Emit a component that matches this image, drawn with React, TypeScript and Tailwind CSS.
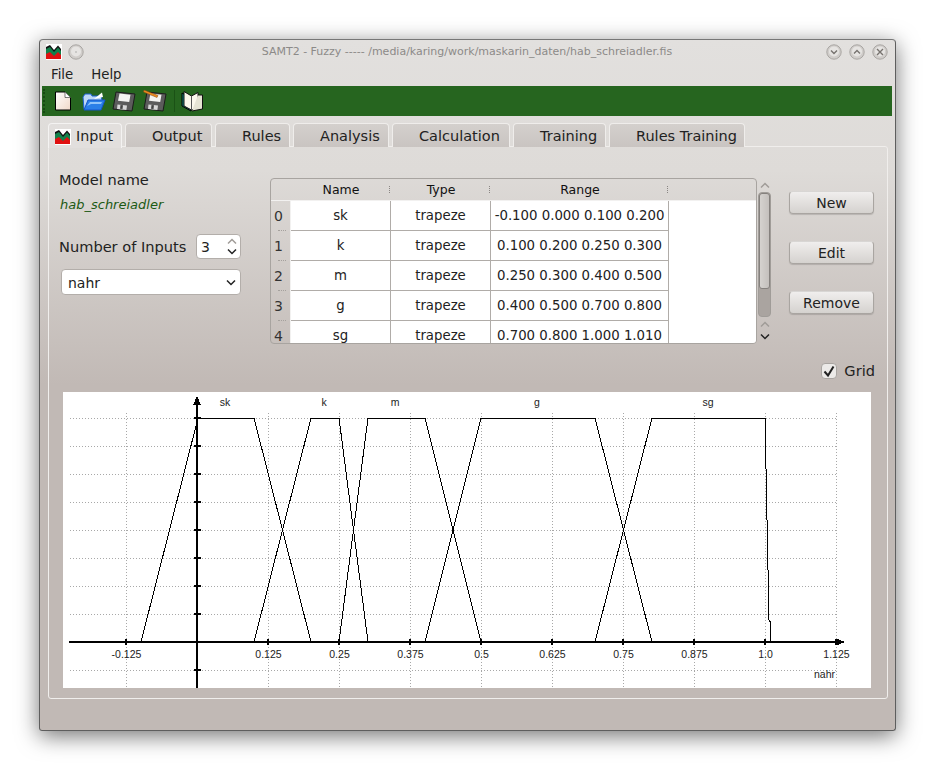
import React from 'react';

const rows = [
    ['sk', '-0.100 0.000 0.100 0.200'],
    ['k', '0.100 0.200 0.250 0.300'],
    ['m', '0.250 0.300 0.400 0.500'],
    ['g', '0.400 0.500 0.700 0.800'],
    ['sg', '0.700 0.800 1.000 1.010'],
];

const tabs = [
    { label: 'Output', w: 'w-[87px]' },
    { label: 'Rules', w: 'w-[75px]' },
    { label: 'Analysis', w: 'w-[96px]' },
    { label: 'Calculation', w: 'w-[118px]' },
    { label: 'Training', w: 'w-[93px]' },
    { label: 'Rules Training', w: 'w-[136px]' },
];

const AppIcon = () => (
    <svg width="16" height="16" viewBox="0 0 16 16" className="shrink-0">
        <rect width="16" height="16" fill="#fff" />
        <path d="M0 15V3L4 1L8 6L12 1.5L15 5V15Z" fill="#111" />
        <path d="M0 15V5L4 3L8 8L12 3.5L15 7V15Z" fill="#12804a" />
        <path d="M0 15V10L4 8L8 12L12 8L15 11V15Z" fill="#e01010" />
    </svg>
);

const Floppy = ({ pencil }: { pencil?: boolean }) => (
    <svg width="24" height="24" viewBox="0 0 24 24" className="shrink-0">
        <path d="M4 3L23 5L20 22L1 20Z" fill="#5c5c5c" stroke="#1c1c1c" strokeWidth="1" />
        <path d="M7.5 4.5L18.5 5.7L17.2 13L6 11.8Z" fill="#f4f4f2" />
        <path d="M5.5 15.5L15 16.5L14.4 21L5 20Z" fill="#d8d8d8" />
        <path d="M8.5 16L11 16.3L10.5 20L8 19.7Z" fill="#444" />
        {pencil && <path d="M1 1L15 6.5L14 8.5L0.5 3Z" fill="#ee8a20" stroke="#7a4a10" strokeWidth="0.5" />}
    </svg>
);

const WinButton = ({ d }: { d?: string }) => (
    <svg width="16" height="16" viewBox="0 0 16 16" className="shrink-0">
        <circle cx="8" cy="8" r="7.2" fill="#d0cdca" stroke="#a9a6a3" />
        <circle cx="8" cy="7.4" r="5" fill="#e6e4e2" />
        {d ? <path d={d} fill="none" stroke="#77736f" strokeWidth="1.4" /> : <circle cx="8" cy="8" r="0.7" fill="#999" />}
    </svg>
);

const Chevron = ({ up, light }: { up?: boolean; light?: boolean }) => (
    <svg width="10" height="7" viewBox="0 0 10 7" className="shrink-0">
        <path d={up ? 'M1 5.5L5 1.5L9 5.5' : 'M1 1.5L5 5.5L9 1.5'} fill="none" stroke={light ? '#a09c98' : '#222'} strokeWidth="1.5" />
    </svg>
);

const xs = [
    [126.5, '-0.125'],
    [268.5, '0.125'],
    [339.5, '0.25'],
    [410.5, '0.375'],
    [481.5, '0.5'],
    [552.5, '0.625'],
    [623.5, '0.75'],
    [694.5, '0.875'],
    [765.5, '1.0'],
    [836.5, '1.125'],
] as const;

const ys = [418, 446, 474, 502, 530, 558, 586, 614, 670];

const shapes = [
    '141,642 198,418 254,418 311,642',
    '254,642 311,418 339,418 368,642',
    '339,642 368,418 425,418 481,642',
    '425,642 481,418 595,418 652,642',
    '595,642 652,418 765,418 769,620 770.5,622 770.5,642',
];

const names = [
    ['sk', 225],
    ['k', 324],
    ['m', 395],
    ['g', 537],
    ['sg', 708],
] as const;

const Chart = () => (
    <svg width="808" height="296" viewBox="63 392 808 296" className="block bg-white" fontFamily="'Liberation Sans', sans-serif" fontSize="10.5" fill="#222">
        <g stroke="#a8a8a8" strokeDasharray="1 2" shapeRendering="crispEdges">
            {ys.map((y) => (
                <line key={y} x1="70" x2="837" y1={y + 0.5} y2={y + 0.5} />
            ))}
            <line x1="70" x2="197" y1="418.5" y2="418.5" />
            {xs.map(([x]) => (
                <line key={x} x1={x} x2={x} y1="413" y2="688" />
            ))}
        </g>
        <g fill="none" stroke="#000" strokeWidth="1" shapeRendering="crispEdges">
            {shapes.map((p) => (
                <polyline key={p} points={p} />
            ))}
        </g>
        <g fill="#000" shapeRendering="crispEdges">
            <rect x="69" y="641" width="770" height="2" />
            <rect x="196" y="402" width="2" height="286" />
            <path d="M197 396L201 405H193Z" />
            <path d="M845 642L838 639.5V644.5Z" />
            <rect x="835" y="639" width="4" height="6" />
            {xs.slice(0, 9).map(([x]) => (
                <rect key={x} x={x - 1.5} y="639" width="2" height="6" />
            ))}
            {[418, ...ys].map((y) => (
                <rect key={y} x="194" y={y - 1} width="7" height="2" />
            ))}
        </g>
        {xs.map(([x, label]) => (
            <text key={label} x={x} y="658" textAnchor="middle">
                {label}
            </text>
        ))}
        {names.map(([label, x]) => (
            <text key={label} x={x} y="406" textAnchor="middle">
                {label}
            </text>
        ))}
        <text x="814" y="678">nahr</text>
    </svg>
);

const SideButton = ({ label }: { label: string }) => (
    <button className="w-[85px] h-[23px] rounded-[4px] border border-[#a9a5a1] border-t-[#d8d6d4] bg-gradient-to-b from-[#f0eeed] to-[#d5d2cf] text-[14px] leading-[20px] text-[#222] shadow-[0_1px_1px_rgba(0,0,0,0.15)]">
        {label}
    </button>
);

export default function App() {
    return (
        <div className="w-[934px] h-[770px] bg-white pt-[39px] pl-[39px] overflow-hidden font-['DejaVu_Sans',sans-serif] text-[#222]">
            <div className="w-[857px] h-[692px] flex flex-col border border-[#5e5e5e] border-t-[#777] rounded-t-[4px] rounded-b-[3px] shadow-[0_5px_22px_rgba(0,0,0,0.55)] bg-[linear-gradient(#e2e0de_0,#dedbd8_130px,#c1b9b5_345px)]">
                {/* title bar */}
                <div className="h-[24px] relative flex items-center pl-[6px] shrink-0">
                    <AppIcon />
                    <div className="ml-[6px]">
                        <WinButton />
                    </div>
                    <div className="flex-1 pl-[24px] text-center text-[11px] text-[#8c8a88] whitespace-nowrap">
                        SAMT2 - Fuzzy ----- /media/karing/work/maskarin_daten/hab_schreiadler.fis
                    </div>
                    <div className="flex gap-[7px] pr-[7px]">
                        <WinButton d="M5 6.5L8 9.5L11 6.5" />
                        <WinButton d="M5 9.5L8 6.5L11 9.5" />
                        <WinButton d="M5 5L11 11M11 5L5 11" />
                    </div>
                </div>

                {/* menu */}
                <div className="h-[21px] mb-[1px] flex items-center gap-[18px] pl-[11px] text-[13.3px] shrink-0">
                    <span>File</span>
                    <span>Help</span>
                </div>

                {/* toolbar */}
                <div className="h-[30px] w-[850px] ml-[2px] bg-[#26651f] flex items-center shrink-0 relative">
                    <div className="w-[3px] h-[24px] ml-[1px] border-l-2 border-dotted border-[#174a12]" />
                    <svg width="18" height="20" viewBox="0 0 18 20" className="ml-[8px] shrink-0">
                        <defs>
                            <linearGradient id="pg" x1="0" y1="0" x2="1" y2="1">
                                <stop offset="0" stopColor="#fff" />
                                <stop offset="1" stopColor="#f0d8c8" />
                            </linearGradient>
                        </defs>
                        <path d="M1.5 1H11L16.5 6.5V19H1.5Z" fill="url(#pg)" stroke="#000" />
                        <path d="M11 1V6.5H16.5" fill="#fff" stroke="#444" strokeWidth="0.7" />
                    </svg>
                    <svg width="24" height="20" viewBox="0 0 24 20" className="ml-[10px] shrink-0">
                        <path d="M2 18L1 6L3 3H9L10 5H19L20 9" fill="#bcd7f6" stroke="#1a5fd0" />
                        <path d="M12 8L20 1.5L21 6Z" fill="#fff" />
                        <path d="M2 19L6 9H23L19 19Z" fill="#2a7fe8" stroke="#1455c8" />
                        <path d="M5 15L8 11H20L19 13H9Z" fill="#8fc4fa" />
                    </svg>
                    <div className="ml-[6px]">
                        <Floppy />
                    </div>
                    <div className="ml-[7px]">
                        <Floppy pencil />
                    </div>
                    <div className="w-px h-[22px] ml-[7px] bg-[#1b5216]" />
                    <svg width="24" height="22" viewBox="0 0 24 22" className="ml-[5px] shrink-0">
                        <path d="M2 3L11 8V21L2 16Z" fill="#14807a" stroke="#000" />
                        <path d="M4 1.5L11.5 6L18 2.5V17L11.5 20L4 16Z" fill="#fbf8ec" stroke="#111" />
                        <path d="M18 5H22.5V19L12 21" fill="#e6e4d4" stroke="#111" />
                        <path d="M11.5 6V20" stroke="#555" />
                    </svg>
                </div>

                {/* tabs */}
                <div className="h-[25px] mt-[6px] pl-[8px] flex items-end shrink-0 relative z-10 -mb-px">
                    <div className="w-[74px] h-[25px] -mb-px flex items-center gap-[5px] pl-[6px] pt-[2px] border border-b-0 border-[#f4f3f2] rounded-t-[4px] bg-[#e2dfdd] text-[14.3px]">
                        <AppIcon />
                        <span>Input</span>
                    </div>
                    <div className="flex gap-[3px] ml-[3px] h-[24px]">
                        {tabs.map((t) => (
                            <div
                                key={t.label}
                                className={`${t.w} pl-[26px] pt-[2px] flex items-center border border-b-0 border-[#efedeb] rounded-t-[4px] bg-gradient-to-b from-[#d4d0cd] to-[#c9c4c1] text-[14.5px] whitespace-nowrap`}
                            >
                                {t.label}
                            </div>
                        ))}
                    </div>
                </div>

                {/* panel */}
                <div className="w-[840px] h-[553px] ml-[8px] border border-[#f0eeec] rounded-[3px] pt-[31px] shrink-0 relative">
                    <div className="flex h-[166px]">
                        <div className="w-[221px] pl-[10px] shrink-0">
                            <div className="text-[14.6px] leading-[17px] mt-[-7px]">Model name</div>
                            <div className="text-[13px] leading-[17px] mt-[8px] pl-px italic text-[#1c5a14]">hab_schreiadler</div>
                            <div className="flex items-center mt-[21px] h-[25px]">
                                <span className="text-[14.6px] w-[137px] pt-[1px]">Number of Inputs</span>
                                <div className="w-[45px] h-[25px] flex items-center justify-between pl-[4px] pr-[3px] bg-white border border-[#b3aeaa] rounded-[4px] text-[14px]">
                                    <span className="pt-[1px]">3</span>
                                    <div className="flex flex-col gap-[3px]">
                                        <Chevron up light />
                                        <Chevron />
                                    </div>
                                </div>
                            </div>
                            <div className="ml-[2px] mt-[10px] w-[180px] h-[26px] flex items-center justify-between pl-[6px] pr-[4px] bg-white border border-[#b3aeaa] rounded-[4px] text-[14px]">
                                <span className="pt-[2px]">nahr</span>
                                <Chevron />
                            </div>
                        </div>

                        {/* table */}
                        <div className="w-[487px] h-[166px] shrink-0 overflow-hidden border border-[#a8a4a0] rounded-[4px]">
                            <div className="h-[22px] flex text-[12.5px] pt-[2px] border-b border-[#f2f1f0] text-[#111]">
                                <div className="w-[20px]" />
                                {[
                                    ['Name', 'w-[100px]'],
                                    ['Type', 'w-[100px]'],
                                    ['Range', 'w-[178px]'],
                                ].map(([h, w]) => (
                                    <div key={h} className={`${w} relative flex items-center justify-center`}>
                                        {h}
                                        <div className="absolute right-[1px] top-[5px] h-[7px] border-r border-dotted border-[#8a8683]" />
                                    </div>
                                ))}
                            </div>
                            <div className="flex flex-col">
                                {rows.map(([name, range], i) => (
                                    <div key={name} className="flex h-[30px] shrink-0">
                                        <div className="w-[19px] pl-[3px] relative flex items-center text-[14px] text-[#333]">
                                            {i}
                                            <div className="absolute left-[7px] bottom-[0px] w-[8px] border-t border-dotted border-[#a5a19d]" />
                                        </div>
                                        <div className="flex-1 flex bg-white text-[13.3px] border-l border-[#f2f1f0]">
                                            <div className="w-[100px] flex items-center justify-center border-r border-b border-[#b0aca8]">{name}</div>
                                            <div className="w-[100px] flex items-center justify-center border-r border-b border-[#b0aca8]">trapeze</div>
                                            <div className="w-[178px] flex items-center justify-center border-r border-b border-[#b0aca8] whitespace-nowrap">{range}</div>
                                        </div>
                                    </div>
                                ))}
                            </div>
                        </div>

                        {/* scrollbar */}
                        <div className="w-[15px] flex flex-col items-center shrink-0">
                            <div className="h-[14px] flex items-center">
                                <Chevron up light />
                            </div>
                            <div className="w-[13px] h-[125px] rounded-[4px] border border-[#a09c98] bg-[#aaa4a0] overflow-hidden">
                                <div className="h-[96px] rounded-[3px] border border-[#85817e] bg-gradient-to-r from-[#d5d2cf] to-[#c4c0bd]" />
                            </div>
                            <div className="mt-[4px] flex flex-col gap-[5px]">
                                <Chevron up light />
                                <Chevron />
                            </div>
                        </div>

                        {/* buttons */}
                        <div className="ml-[17px] pt-[13px] flex flex-col gap-[27px]">
                            <SideButton label="New" />
                            <SideButton label="Edit" />
                            <SideButton label="Remove" />
                        </div>
                    </div>

                    {/* grid toggle */}
                    <div className="h-[17px] mt-[18px] flex justify-end items-center gap-[7px] pr-[12px] text-[14.6px]">
                        <div className="w-[16px] h-[16px] rounded-[4px] border border-[#a9a5a1] bg-[#eceae8] flex items-center justify-center">
                            <svg width="14" height="14" viewBox="0 0 14 14">
                                <path d="M2.5 7.5L6 11.5L11.5 2.5" fill="none" stroke="#222" strokeWidth="2" />
                            </svg>
                        </div>
                        <span>Grid</span>
                    </div>

                    {/* chart */}
                    <div className="ml-[14px] mt-[13px] w-[808px]">
                        <Chart />
                    </div>
                </div>
            </div>
        </div>
    );
}
